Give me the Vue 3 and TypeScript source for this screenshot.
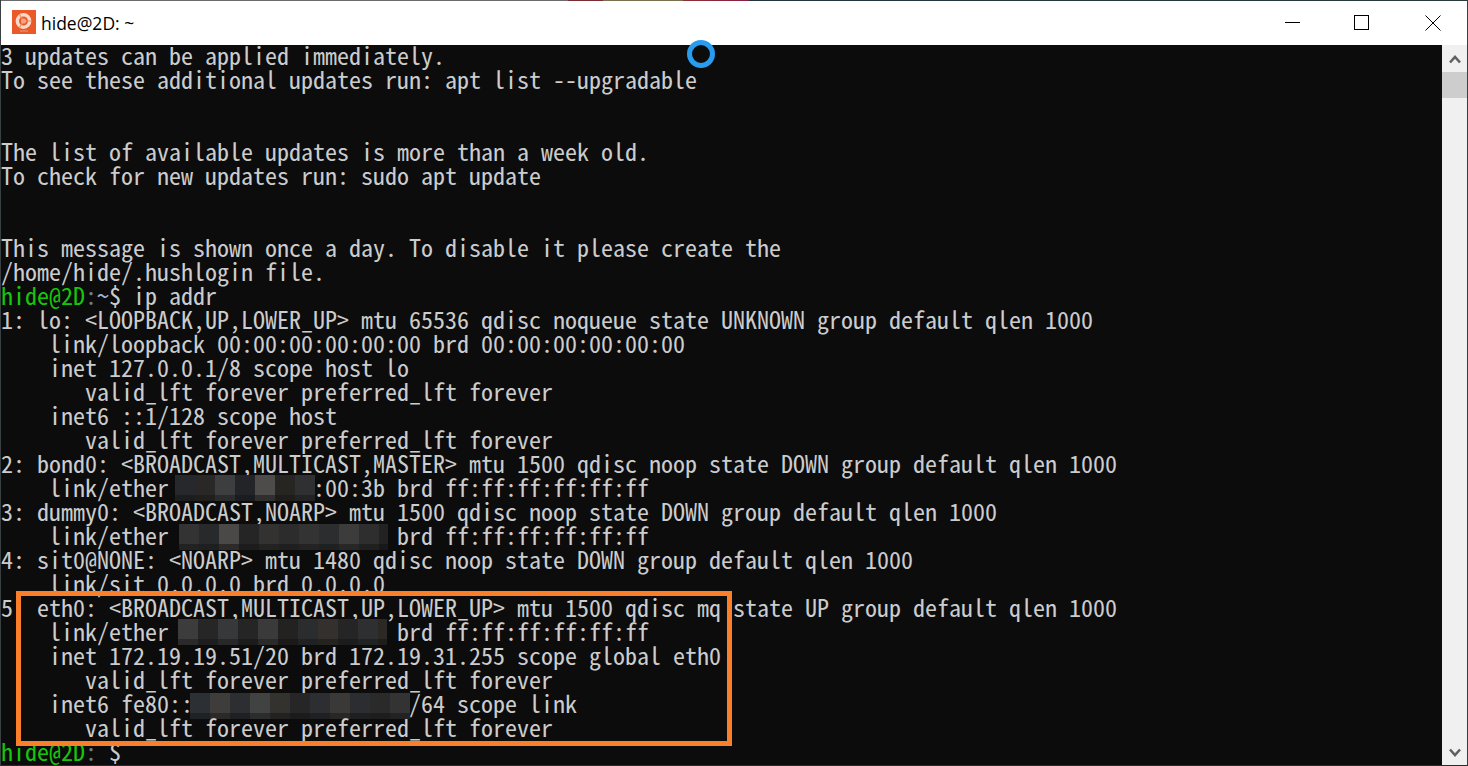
<script setup lang="ts">
type Seg = { t?: string; c?: string; mask?: number };
const mosaics: Record<number, { w: number; ml: number; mr: number; mt: number; top: string[]; bot: string[] }> = {
  1: { w: 140, ml: -5, mr: -3, mt: -2, top: ['#26282b','#2a2826','#3c3e40','#222427','#4d4c4a','#262522','#2f3032'], bot: ['#1c1d1f','#201f1d','#2a2b2c','#1b1c1f','#302f2e','#1e1d1b','#222324'] },
  2: { w: 209, ml: -1, mr: -4, mt: -1, top: ['#333333','#28292b','#4a4947','#252525','#333230','#2c2c2c','#333333','#2c2d2e','#3c3c3c','#2e2e2e','#222222'], bot: ['#222222','#1e1f20','#2c2b2a','#1c1c1c','#232322','#1f1f1f','#232323','#1f2020','#272727','#202020','#181818'] },
  3: { w: 209, ml: -2, mr: -3, mt: -2, top: ['#3c3c3c','#262626','#37383a','#252525','#3a3a3a','#232220','#2b2c2e','#33302d','#252525','#2d2f31','#2c2925'], bot: ['#2a2a2a','#1e1e1e','#282829','#1c1c1c','#2a2a2a','#1b1a19','#202122','#252320','#1c1c1c','#212223','#1f1d1a'] },
  4: { w: 220, ml: -2, mr: -2, mt: 0, top: ['#2c3035','#3e3d3b','#2c2e31','#414342','#34322e','#262626','#2c2e31','#3a3937','#2b2d30','#2a2a2a','#333333'], bot: ['#1f2225','#2a2a28','#1f2022','#2b2c2c','#232220','#1b1b1b','#1f2022','#282726','#1e1f21','#1d1d1d','#222222'] },
};
const g = '#16c60c';
const dim = '#6f8080';
const p = (s: string): Seg => ({ t: s });
const lines: Seg[][] = [
  [p('3 updates can be applied immediately.')],
  [p('To see these additional updates run: apt list --upgradable')],
  [], [],
  [p('The list of available updates is more than a week old.')],
  [p('To check for new updates run: sudo apt update')],
  [], [],
  [p('This message is shown once a day. To disable it please create the')],
  [p('/home/hide/.hushlogin file.')],
  [{ t: 'hide@2D', c: g }, { t: ':', c: dim }, { t: '~', c: '#9fb4d8' }, p('$ ip addr')],
  [p('1: lo: <LOOPBACK,UP,LOWER_UP> mtu 65536 qdisc noqueue state UNKNOWN group default qlen 1000')],
  [p('    link/loopback 00:00:00:00:00:00 brd 00:00:00:00:00:00')],
  [p('    inet 127.0.0.1/8 scope host lo')],
  [p('       valid_lft forever preferred_lft forever')],
  [p('    inet6 ::1/128 scope host')],
  [p('       valid_lft forever preferred_lft forever')],
  [p('2: bond0: <BROADCAST,MULTICAST,MASTER> mtu 1500 qdisc noop state DOWN group default qlen 1000')],
  [p('    link/ether '), { mask: 1 }, p(':00:3b brd ff:ff:ff:ff:ff:ff')],
  [p('3: dummy0: <BROADCAST,NOARP> mtu 1500 qdisc noop state DOWN group default qlen 1000')],
  [p('    link/ether '), { mask: 2 }, p(' brd ff:ff:ff:ff:ff:ff')],
  [p('4: sit0@NONE: <NOARP> mtu 1480 qdisc noop state DOWN group default qlen 1000')],
  [p('    link/sit 0.0.0.0 brd 0.0.0.0')],
  [p('5: eth0: <BROADCAST,MULTICAST,UP,LOWER_UP> mtu 1500 qdisc mq state UP group default qlen 1000')],
  [p('    link/ether '), { mask: 3 }, p(' brd ff:ff:ff:ff:ff:ff')],
  [p('    inet 172.19.19.51/20 brd 172.19.31.255 scope global eth0')],
  [p('       valid_lft forever preferred_lft forever')],
  [p('    inet6 fe80::'), { mask: 4 }, p('/64 scope link')],
  [p('       valid_lft forever preferred_lft forever')],
  [{ t: 'hide@2D', c: g }, { t: ':', c: dim }, p(' $')],
];
</script>

<template>
  <div class="win">
    <div class="edge"></div>
    <header class="titlebar">
      <svg class="appicon" width="24" height="24" viewBox="0 0 24 24">
        <rect width="24" height="24" fill="#ea5a28" />
        <circle cx="11.5" cy="11" r="6.2" fill="none" stroke="#fbd9ca" stroke-width="3.4" />
        <path d="M11.5 11L19 11M11.5 11L7.5 4.5M11.5 11L7.5 17.5" stroke="#f08a60" stroke-width="1.2" />
        <circle cx="11.5" cy="11" r="2.6" fill="#f5a57f" />
        <rect x="8" y="20.5" width="8" height="1" fill="#f39a74" />
      </svg>
      <span class="title">hide@2D: ~</span>
      <div class="controls">
        <svg class="ctl min" width="16" height="16" viewBox="0 0 16 16"><path d="M0 7.5H15" stroke="#000" fill="none" /></svg>
        <svg class="ctl max" width="16" height="16" viewBox="0 0 16 16"><rect x="0.5" y="0.5" width="14" height="14" stroke="#000" fill="none" /></svg>
        <svg class="ctl cls" width="16" height="16" viewBox="0 0 16 16"><path d="M0.5 0.5L15.5 15.5M15.5 0.5L0.5 15.5" stroke="#000" fill="none" /></svg>
      </div>
    </header>
    <main class="body">
      <div class="term">
        <div v-for="(line, i) in lines" :key="i" class="line">
          <template v-for="(s, j) in line" :key="j">
            <span
              v-if="s.mask"
              class="mask"
              :style="{
                width: mosaics[s.mask].w + 'px',
                marginLeft: mosaics[s.mask].ml - 1 + 'px',
                marginRight: mosaics[s.mask].mr + 1 + 'px',
                marginTop: mosaics[s.mask].mt + 'px',
              }"
            >
              <span class="row top">
                <i v-for="(c, k) in mosaics[s.mask].top" :key="k" :style="{ background: c }"></i>
              </span>
              <span class="row bot">
                <i v-for="(c, k) in mosaics[s.mask].bot" :key="k" :style="{ background: c }"></i>
              </span>
            </span>
            <span v-else :style="s.c ? { color: s.c } : undefined">{{ s.t }}</span>
          </template>
        </div>
        <div class="highlight"></div>
      </div>
      <aside class="scroll">
        <svg class="arrow up" width="12" height="9" viewBox="0 0 12 9"><path d="M1 7.5L6 2L11 7.5" stroke="#606060" stroke-width="2.6" fill="none" /></svg>
        <div class="thumb"></div>
        <div class="track"></div>
        <svg class="arrow down" width="12" height="9" viewBox="0 0 12 9"><path d="M1 1.5L6 7L11 1.5" stroke="#606060" stroke-width="2.6" fill="none" /></svg>
      </aside>
    </main>
    <div class="spinner"></div>
  </div>
</template>

<style>
html, body { margin: 0; background: #0c0c0c; overflow: hidden; }
</style>

<style scoped>
.win {
  position: relative;
  width: 1468px;
  height: 766px;
  box-sizing: border-box;
  border: 1px solid #3a3f41;
  border-top: 0;
  border-bottom-color: #2a2a2a;
  display: flex;
  flex-direction: column;
  overflow: hidden;
  background: #0c0c0c;
}
.edge {
  flex: none;
  height: 1px;
  margin: 0 -1px;
  background: linear-gradient(90deg, #6b6b6b 0, #6b6b6b 568px, #7a2d35 568px, #7a2d35 603px, #7a7050 603px, #7a7050 683px, #8a3038 683px, #8a1f40 748px, #21343a 750px, #2a3a3a 100%);
}
.titlebar {
  height: 44px;
  flex: none;
  background: #fff;
  display: flex;
  align-items: center;
  padding-left: 11px;
  box-sizing: border-box;
}
.appicon { flex: none; margin-top: -2px; }
.title {
  margin-left: 5px;
  font: 17.5px "Open Sans", "Noto Sans", sans-serif;
  color: #000;
  white-space: nowrap;
}
.controls {
  margin-left: auto;
  display: flex;
  align-self: flex-start;
  padding: 14px 26px 0 0;
}
.ctl { flex: none; display: block; }
.ctl.max { margin-left: 53px; }
.ctl.cls { margin-left: 55px; }
.body { flex: 1; display: flex; min-height: 0; }
.term {
  flex: 1;
  position: relative;
  font-family: "Noto Sans CJK JP", "Liberation Mono", monospace;
  font-size: 24px;
  font-feature-settings: "hwid", "liga" 0, "clig" 0, "kern" 0;
  font-variant-ligatures: none;
  line-height: 20px;
  color: #cccccc;
  white-space: pre;
  min-width: 0;
}
.line { height: 24px; }
.mask {
  display: inline-flex;
  flex-direction: column;
  vertical-align: top;
  height: 26px;
  overflow: hidden;
}
.row { display: flex; flex: none; }
.row.top { height: 20px; }
.row.bot { height: 6px; }
.row i { flex: 0 0 20px; display: block; }
.highlight {
  position: absolute;
  left: 15px;
  top: 546px;
  width: 706px;
  height: 145px;
  border: 5px solid #f97f2a;
}
.scroll {
  width: 25px;
  flex: none;
  background: #f0f0f0;
  display: flex;
  flex-direction: column;
  align-items: center;
}
.arrow { flex: none; }
.arrow.up { margin: 10px 0 8px; }
.arrow.down { margin: 0 0 8px; }
.thumb { flex: none; width: 100%; height: 26px; background: #cdcdcd; }
.track { flex: 1; }
.spinner {
  position: absolute;
  left: 686px;
  top: 40px;
  width: 28px;
  height: 28px;
  box-sizing: border-box;
  border: 5px solid #2a9cf0;
  border-radius: 50%;
}
</style>
